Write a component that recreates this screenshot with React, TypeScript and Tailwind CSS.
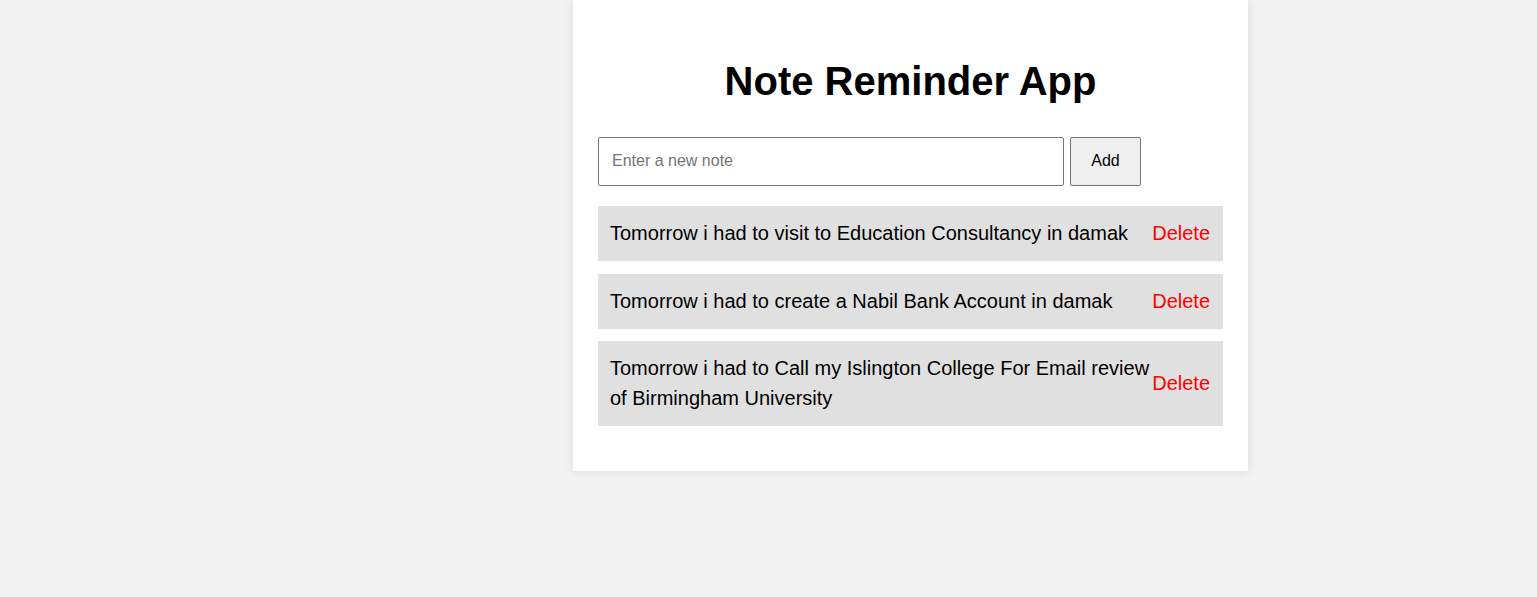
import { useState } from "react";

type Note = { id: number; text: string };

const initialNotes: Note[] = [
  { id: 1, text: "Tomorrow i had to visit to Education Consultancy in damak" },
  { id: 2, text: "Tomorrow i had to create a Nabil Bank Account in damak" },
  { id: 3, text: "Tomorrow i had to Call my Islington College For Email review of Birmingham University" },
];

export default function App() {
  const [notes, setNotes] = useState<Note[]>(initialNotes);
  const [text, setText] = useState("");

  const addNote = () => {
    if (!text.trim()) return;
    setNotes([...notes, { id: Date.now(), text }]);
    setText("");
  };

  const deleteNote = (id: number) => setNotes(notes.filter((n) => n.id !== id));

  return (
    <div className="min-h-screen bg-[#f2f2f2] font-['Liberation_Sans',Arial,sans-serif] text-black">
      <div className="ml-[573px] w-[675px] bg-white px-[25px] pt-[58px] pb-[45px] shadow-[0_0_10px_rgba(0,0,0,0.1)]">
        <h1 className="text-center text-[40px] font-bold leading-[46px]">Note Reminder App</h1>
        <div className="mt-[33px] flex gap-[6px]">
          <input
            className="h-[49px] w-[466px] rounded-[2px] border border-[#767676] px-[13px] pb-[1px] text-[16px] placeholder:text-[#757575] outline-none"
            type="text"
            placeholder="Enter a new note"
            value={text}
            onChange={(e) => setText(e.target.value)}
          />
          <button
            className="h-[49px] w-[71px] rounded-[2px] border border-[#767676] bg-[#efefef] pb-[1px] text-[16px]"
            onClick={addNote}
          >
            Add
          </button>
        </div>
        <ul className="mt-[20px] flex flex-col gap-[12.5px]">
          {notes.map((n) => (
            <li key={n.id} className="flex items-center justify-between bg-[#e0e0e0] pt-[12px] pb-[13px] pl-[12px] pr-[13px] text-[20px] leading-[30px]">
              <span>{n.text}</span>
              <button className="shrink-0 text-[20px] text-[#ff0000]" onClick={() => deleteNote(n.id)}>
                Delete
              </button>
            </li>
          ))}
        </ul>
      </div>
    </div>
  );
}
